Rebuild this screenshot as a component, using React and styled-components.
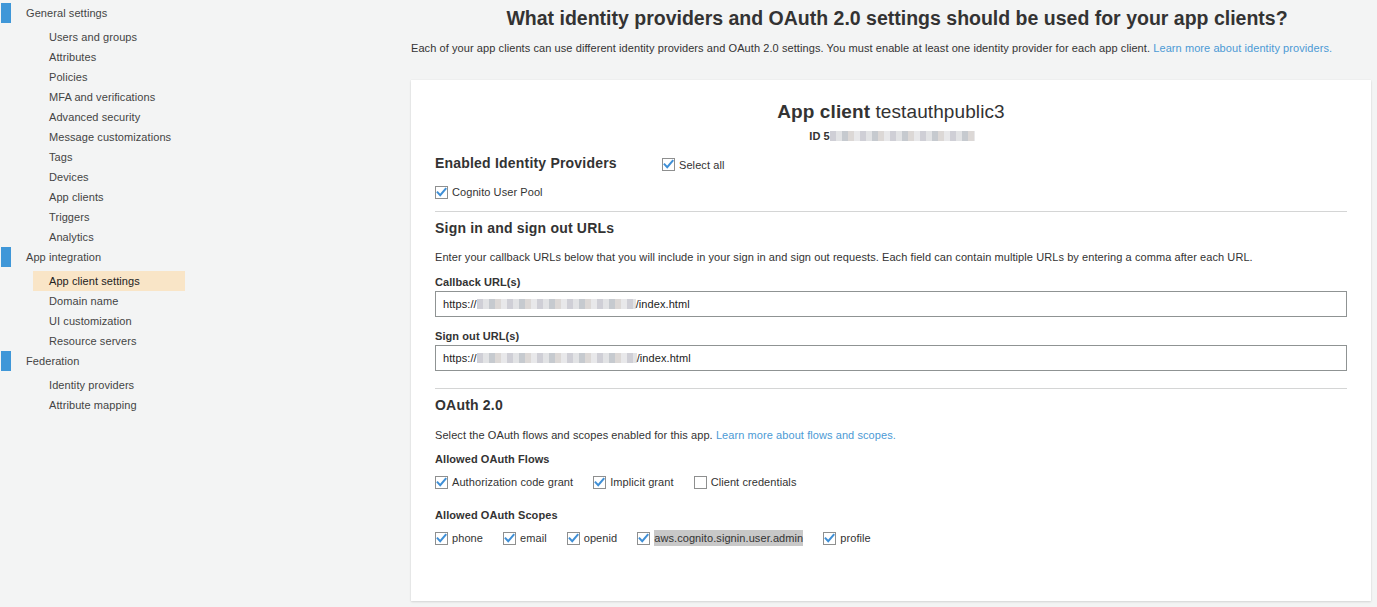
import React from 'react';
import styled, { createGlobalStyle } from 'styled-components';

const GlobalStyle = createGlobalStyle`
  html, body {
    margin: 0;
    padding: 0;
    background: #f3f4f4;
  }
  body {
    font-family: "Liberation Sans", Arial, sans-serif;
    font-size: 11px;
    color: #333;
    letter-spacing: 0.08px;
  }
`;

const Page = styled.div`
  display: flex;
  width: 1377px;
  min-height: 607px;
  background: #f3f4f4;
`;

const Sidebar = styled.nav`
  width: 411px;
  flex-shrink: 0;
  padding-top: 3px;
`;

const Group = styled.div`
  display: flex;
  flex-direction: column;
`;

const GroupHeader = styled.div`
  display: flex;
  align-items: center;
  height: 20px;
  color: #444;
  font-size: 11px;

  &::before {
    content: '';
    width: 10px;
    height: 20px;
    margin-left: 1px;
    margin-right: 15px;
    background: #3f97d8;
  }
`;

const NavList = styled.ul`
  list-style: none;
  margin: 4px 0 0;
  padding: 0;
`;

const NavItem = styled.li`
  width: 152px;
  height: 20px;
  line-height: 20px;
  margin-left: 33px;
  padding-left: 16px;
  box-sizing: border-box;
  color: ${p => (p.$active ? '#222' : '#444')};
  background: ${p => (p.$active ? '#f9e5c7' : 'transparent')};
`;

const Main = styled.main`
  flex: 1;
  padding: 6px 6px 6px 0;
`;

const PageTitle = styled.h1`
  margin: 0;
  padding-left: 12px;
  font-size: 19.5px;
  line-height: 24px;
  font-weight: bold;
  text-align: center;
  color: #333;
  letter-spacing: 0;
`;

const Intro = styled.p`
  margin: 10px 0 0;
  line-height: 16px;
  font-size: 11px;
`;

const Link = styled.a`
  color: #4c9ad5;
  text-decoration: none;
`;

const Card = styled.section`
  margin-top: 24px;
  background: #fff;
  padding: 20px 24px 55px;
  box-shadow: 0 1px 2px rgba(0, 0, 0, 0.12), 0 0 1px rgba(0, 0, 0, 0.08);
`;

const ClientTitle = styled.div`
  text-align: center;
  font-size: 19px;
  line-height: 24px;
  color: #333;
  letter-spacing: 0.1px;

  b {
    font-weight: bold;
  }
`;

const ClientId = styled.div`
  display: flex;
  justify-content: center;
  align-items: center;
  margin-top: 4px;
  line-height: 16px;
  font-size: 11px;
  font-weight: bold;
  padding-left: 2px;
`;

const Redacted = styled.span`
  display: inline-block;
  width: ${p => p.$w}px;
  height: 10px;
  vertical-align: middle;
  background: repeating-linear-gradient(
    90deg,
    #cfcfd6 0 6px,
    #e2e3e5 6px 12px,
    #c6cacf 12px 18px,
    #dcd8d6 18px 24px,
    #e8e8ea 24px 30px
  );
`;

const ProvidersRow = styled.div`
  display: flex;
  align-items: center;
  margin-top: 9px;
`;

const SectionHeading = styled.h2`
  margin: ${p => p.$mt || 0}px 0 0;
  width: ${p => (p.$w ? `${p.$w}px` : 'auto')};
  font-size: 14px;
  line-height: 20px;
  font-weight: bold;
  color: #333;
  letter-spacing: 0.2px;
`;

const Divider = styled.hr`
  margin: ${p => p.$mt}px 0 0;
  border: 0;
  border-top: 1px solid #d4d5d5;
`;

const Text = styled.p`
  margin: ${p => p.$mt}px 0 0;
  line-height: 16px;
  font-size: 11px;
`;

const FieldLabel = styled.div`
  margin-top: ${p => p.$mt}px;
  line-height: 16px;
  font-size: 11px;
  font-weight: bold;
`;

const UrlInput = styled.div`
  margin-top: 1px;
  height: 26px;
  box-sizing: border-box;
  border: 1px solid #8f9393;
  display: flex;
  align-items: center;
  padding-left: 7px;
  font-size: 11px;
  color: #222;
`;

const CheckRow = styled.div`
  display: flex;
  align-items: center;
  gap: 20px;
  margin-top: ${p => p.$mt || 0}px;
  height: 16px;
`;

const CheckLabel = styled.label`
  display: inline-flex;
  align-items: center;
  gap: 4px;
  font-size: 11px;
  line-height: 16px;
  color: #333;
  white-space: nowrap;
  margin-top: ${p => p.$offset || 0}px;
`;

const Selected = styled.span`
  background: #c8c8c8;
`;

function CheckBox({ checked }) {
  return (
    <svg width="13" height="13" viewBox="0 0 13 13">
      <rect x="0.5" y="0.5" width="12" height="12" fill="#fff" stroke="#8e8f8f" />
      {checked && (
        <path
          d="M2.6 6.4 L5.2 9.2 L10.6 2.8"
          fill="none"
          stroke="#3f8fd6"
          strokeWidth="2"
          strokeLinecap="square"
        />
      )}
    </svg>
  );
}

function Check({ checked = true, children, offset }) {
  return (
    <CheckLabel $offset={offset}>
      <CheckBox checked={checked} />
      {children}
    </CheckLabel>
  );
}

const nav = [
  {
    title: 'General settings',
    items: [
      'Users and groups',
      'Attributes',
      'Policies',
      'MFA and verifications',
      'Advanced security',
      'Message customizations',
      'Tags',
      'Devices',
      'App clients',
      'Triggers',
      'Analytics',
    ],
  },
  {
    title: 'App integration',
    items: ['App client settings', 'Domain name', 'UI customization', 'Resource servers'],
  },
  {
    title: 'Federation',
    items: ['Identity providers', 'Attribute mapping'],
  },
];

export default function App() {
  return (
    <>
      <GlobalStyle />
      <Page>
        <Sidebar>
          {nav.map(group => (
            <Group key={group.title}>
              <GroupHeader>{group.title}</GroupHeader>
              <NavList>
                {group.items.map(item => (
                  <NavItem key={item} $active={item === 'App client settings'}>
                    {item}
                  </NavItem>
                ))}
              </NavList>
            </Group>
          ))}
        </Sidebar>

        <Main>
          <PageTitle>
            What identity providers and OAuth 2.0 settings should be used for your app clients?
          </PageTitle>
          <Intro>
            Each of your app clients can use different identity providers and OAuth 2.0 settings. You
            must enable at least one identity provider for each app client.{' '}
            <Link href="#">Learn more about identity providers.</Link>
          </Intro>

          <Card>
            <ClientTitle>
              <b>App client</b> testauthpublic3
            </ClientTitle>
            <ClientId>
              ID 5<Redacted $w={145} />
            </ClientId>

            <ProvidersRow>
              <SectionHeading $w={227}>Enabled Identity Providers</SectionHeading>
              <Check offset={3}>Select all</Check>
            </ProvidersRow>
            <CheckRow $mt={11}>
              <Check>Cognito User Pool</Check>
            </CheckRow>

            <Divider $mt={11} />
            <SectionHeading $mt={6}>Sign in and sign out URLs</SectionHeading>
            <Text $mt={11}>
              Enter your callback URLs below that you will include in your sign in and sign out
              requests. Each field can contain multiple URLs by entering a comma after each URL.
            </Text>
            <FieldLabel $mt={9}>Callback URL(s)</FieldLabel>
            <UrlInput>
              https://<Redacted $w={159} />/index.html
            </UrlInput>
            <FieldLabel $mt={11}>Sign out URL(s)</FieldLabel>
            <UrlInput>
              https://<Redacted $w={160} />/index.html
            </UrlInput>

            <Divider $mt={17} />
            <SectionHeading $mt={6}>OAuth 2.0</SectionHeading>
            <Text $mt={12}>
              Select the OAuth flows and scopes enabled for this app.{' '}
              <Link href="#">Learn more about flows and scopes.</Link>
            </Text>
            <FieldLabel $mt={8}>Allowed OAuth Flows</FieldLabel>
            <CheckRow $mt={7}>
              <Check>Authorization code grant</Check>
              <Check>Implicit grant</Check>
              <Check checked={false}>Client credentials</Check>
            </CheckRow>
            <FieldLabel $mt={17}>Allowed OAuth Scopes</FieldLabel>
            <CheckRow $mt={7}>
              <Check>phone</Check>
              <Check>email</Check>
              <Check>openid</Check>
              <Check>
                <Selected>aws.cognito.signin.user.admin</Selected>
              </Check>
              <Check>profile</Check>
            </CheckRow>
          </Card>
        </Main>
      </Page>
    </>
  );
}
